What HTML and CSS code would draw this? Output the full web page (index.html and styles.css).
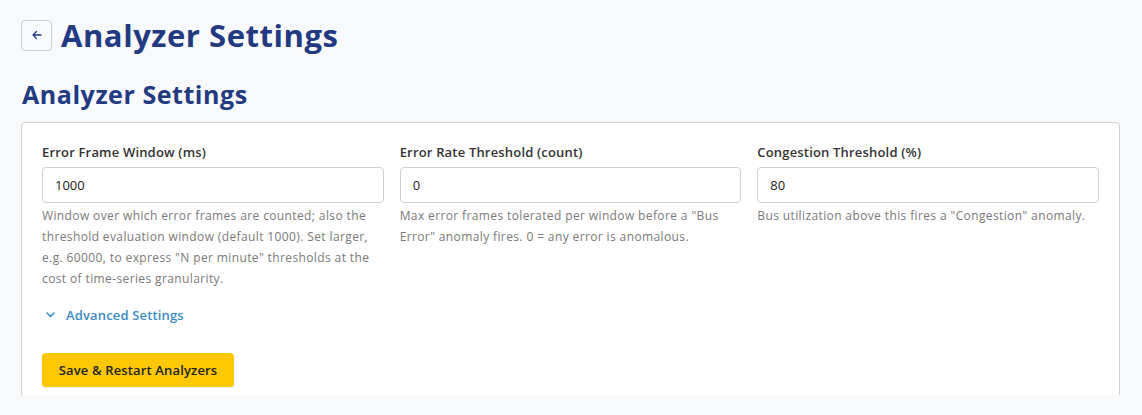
FILE: index.html
```html
<!DOCTYPE html>
<html>
<head>
<meta charset="utf-8">
<link rel="stylesheet" href="styles.css">
</head>
<body>
<div class="page">
  <header class="top">
    <button class="back" aria-label="Back">
      <svg width="12" height="12" viewBox="0 0 12 12"><path d="M10 6H2M5.5 2.5L2 6l3.5 3.5" fill="none" stroke="#1f3a84" stroke-width="1.3" stroke-linecap="round" stroke-linejoin="round"/></svg>
    </button>
    <h1 class="title">Analyzer Settings</h1>
  </header>
  <h2 class="subtitle">Analyzer Settings</h2>
  <section class="card">
    <div class="fields">
      <div class="field">
        <label class="label">Error Frame Window (ms)</label>
        <input class="input" value="1000">
        <p class="help">Window over which error frames are counted; also the threshold evaluation window (default 1000). Set larger, e.g. 60000, to express "N per minute" thresholds at the cost of time-series granularity.</p>
      </div>
      <div class="field">
        <label class="label">Error Rate Threshold (count)</label>
        <input class="input" value="0">
        <p class="help">Max error frames tolerated per window before a "Bus Error" anomaly fires. 0 = any error is anomalous.</p>
      </div>
      <div class="field">
        <label class="label">Congestion Threshold (%)</label>
        <input class="input" value="80">
        <p class="help">Bus utilization above this fires a "Congestion" anomaly.</p>
      </div>
    </div>
    <div class="advanced">
      <svg width="9" height="6" viewBox="0 0 9 6"><path d="M1 1l3.5 3.5L8 1" fill="none" stroke="#3d8cc4" stroke-width="1.6" stroke-linecap="round" stroke-linejoin="round"/></svg>
      <span>Advanced Settings</span>
    </div>
    <button class="save">Save &amp; Restart Analyzers</button>
  </section>
</div>
</body>
</html>
```
FILE: styles.css
```css
html, body {
  margin: 0;
  padding: 0;
  background: #f8f9fb;
}
body {
  font-family: "Open Sans", "DejaVu Sans", sans-serif;
  color: #333;
}
.page {
  height: 395px;
  overflow: hidden;
  padding: 14px 22px 0 21px;
  box-sizing: border-box;
}
.top {
  display: flex;
  align-items: center;
  gap: 9px;
  height: 42px;
}
.back {
  width: 31px;
  height: 31px;
  border: 1px solid #c9ccd2;
  border-radius: 4px;
  background: #f8f9fb;
  display: flex;
  align-items: center;
  justify-content: center;
  padding: 0;
}
.title {
  margin: 0;
  font-size: 31px;
  font-weight: 700;
  color: #213a82;
  letter-spacing: 0.55px;
}
.subtitle {
  margin: 23px 0 0 1px;
  font-size: 25px;
  font-weight: 700;
  color: #213a82;
  height: 43px;
  line-height: 30px;
  letter-spacing: 0.55px;
}
.card {
  background: #fff;
  border: 1px solid #cfd1d4;
  border-radius: 4px;
  padding: 18px 20px 0 20px;
  height: 400px;
}
.fields {
  display: grid;
  grid-template-columns: repeat(3, 1fr);
  gap: 16px;
}
.field {
  display: flex;
  flex-direction: column;
}
.label {
  font-size: 13px;
  font-weight: 600;
  color: #333;
  height: 26px;
  line-height: 22px;
  letter-spacing: 0.18px;
}
.input {
  height: 36px;
  box-sizing: border-box;
  border: 1px solid #cdd0d4;
  border-radius: 4px;
  padding: 0 12px;
  font-family: inherit;
  font-size: 13px;
  color: #222;
  outline: none;
}
.help {
  margin: 2px 0 0;
  font-size: 12px;
  line-height: 21px;
  color: #7a7a7a;
  letter-spacing: 0.38px;
}
.advanced {
  display: flex;
  align-items: center;
  gap: 11px;
  margin: 15px 0 0 4px;
  height: 22px;
  font-size: 13px;
  font-weight: 600;
  color: #3d8cc4;
  letter-spacing: 0.15px;
}
.save {
  margin-top: 27px;
  height: 34px;
  width: 192px;
  padding: 0;
  background: #fec804;
  border: none;
  border-radius: 4px;
  font-family: inherit;
  font-size: 13px;
  font-weight: 600;
  color: #222;
  letter-spacing: 0.15px;
  box-shadow: 0 1px 2px rgba(0,0,0,0.1);
}
```
